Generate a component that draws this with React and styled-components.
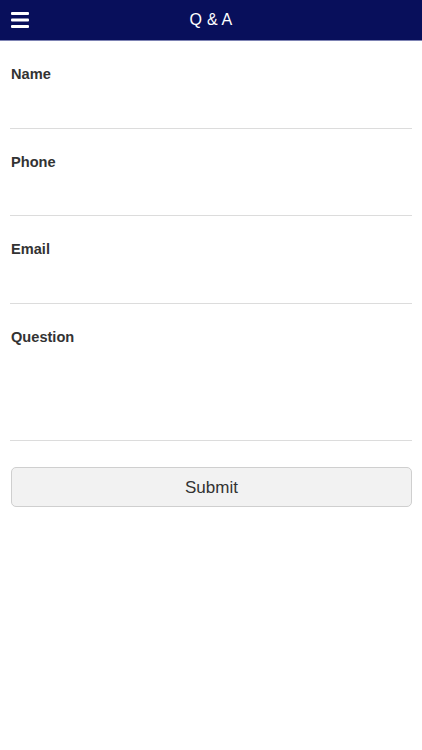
import React from "react";
import styled, { createGlobalStyle } from "styled-components";

const GlobalStyle = createGlobalStyle`
  html, body {
    margin: 0;
    padding: 0;
    background: #fff;
  }
  body {
    font-family: "Liberation Sans", Arial, Helvetica, sans-serif;
    color: #333;
  }
  * {
    box-sizing: border-box;
  }
`;

const Page = styled.div`
  width: 422px;
  min-height: 750px;
  background: #fff;
`;

const Header = styled.header`
  position: relative;
  height: 41px;
  background: #080f5b;
  border-bottom: 1px solid #7d83b3;
  display: flex;
  align-items: center;
  justify-content: center;
`;

const MenuButton = styled.button`
  position: absolute;
  left: 11px;
  top: 11px;
  width: 18px;
  height: 18px;
  padding: 0;
  border: none;
  background: none;
  display: flex;
  cursor: pointer;
`;

const Title = styled.h1`
  margin: 0;
  font-size: 16px;
  font-weight: 400;
  color: #fff;
  line-height: 40px;
  letter-spacing: 0.2px;
`;

const Form = styled.form`
  padding: 0 10px;
  display: flex;
  flex-direction: column;
`;

const Field = styled.div`
  padding-top: 23px;
  border-bottom: 1px solid #dcdcdc;
  display: flex;
  flex-direction: column;
`;

const Label = styled.label`
  padding-left: 1px;
  font-size: 14.6px;
  font-weight: 700;
  line-height: 20px;
  color: #333;
`;

const Input = styled.input`
  height: ${(props) => props.$height || 43.5}px;
  border: none;
  outline: none;
  background: transparent;
  padding: 0;
  font-family: inherit;
  font-size: 15px;
  color: #333;
`;

const TextArea = styled.textarea`
  height: ${(props) => props.$height}px;
  border: none;
  outline: none;
  background: transparent;
  resize: none;
  padding: 0;
  font-family: inherit;
  font-size: 15px;
  color: #333;
`;

const SubmitButton = styled.button`
  margin: 26px 0 0 1px;
  height: 40px;
  padding: 2px 0 0;
  border: 1px solid #cfcfcf;
  border-radius: 5px;
  background: #f2f2f2;
  font-family: "Liberation Sans", Arial, Helvetica, sans-serif;
  font-size: 17px;
  color: #333;
  cursor: pointer;
`;

const MenuIcon = () => (
  <svg width="18" height="18" viewBox="0 0 18 18">
    <rect x="0" y="1" width="18" height="3" rx="1" fill="#fff" />
    <rect x="0" y="7.5" width="18" height="3" rx="1" fill="#fff" />
    <rect x="0" y="14" width="18" height="3" rx="1" fill="#fff" />
  </svg>
);

const fields = [
  { id: "name", label: "Name" },
  { id: "phone", label: "Phone" },
  { id: "email", label: "Email" },
];

const App = () => {
  return (
    <Page>
      <GlobalStyle />
      <Header>
        <MenuButton type="button" aria-label="Menu">
          <MenuIcon />
        </MenuButton>
        <Title>Q &amp; A</Title>
      </Header>
      <Form onSubmit={(e) => e.preventDefault()}>
        {fields.map((f) => (
          <Field key={f.id}>
            <Label htmlFor={f.id}>{f.label}</Label>
            <Input id={f.id} />
          </Field>
        ))}
        <Field>
          <Label htmlFor="question">Question</Label>
          <TextArea id="question" $height={93} />
        </Field>
        <SubmitButton type="submit">Submit</SubmitButton>
      </Form>
    </Page>
  );
};

export default App;
